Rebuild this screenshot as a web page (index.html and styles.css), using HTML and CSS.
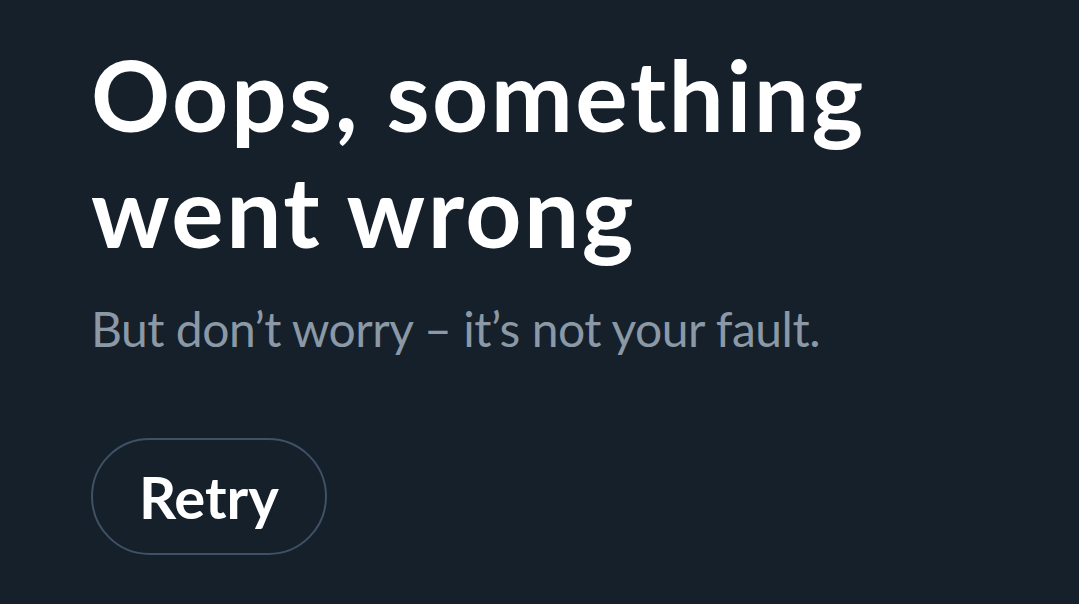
FILE: index.html
```html
<html>
<head>
    <title>Something went wrong</title>
    <link rel="stylesheet" href="styles.css">
</head>
<body>

<div class="error-page">
    <h1 class="error-title">Oops, something went wrong</h1>
    <p class="error-text">But don’t worry – it’s not your fault.</p>
    <button class="retry-btn">Retry</button>
</div>

</body>
</html>
```

FILE: styles.css
```css
body {
    background-color: #15202b;
    color: #ffffff;
    font-family: Lato, 'Noto Sans', sans-serif;
    margin: 0;
    height: 100vh;
    overflow: hidden;
}

.error-page {
    padding: 36px 0 0 91px;
    display: flex;
    flex-direction: column;
    align-items: flex-start;
}

.error-title {
    font-size: 98px;
    line-height: 116px;
    font-weight: 700;
    letter-spacing: 2.5px;
    margin: 0;
    max-width: 880px;
}

.error-text {
    color: #8b98a5;
    font-size: 48px;
    line-height: 58px;
    letter-spacing: -0.5px;
    margin: 32px 0 0 0;
}

.retry-btn {
    margin: 80px 0 0 0;
    height: 117px;
    padding: 0 46px;
    background: transparent;
    color: #ffffff;
    border: 2px solid #3e5165;
    border-radius: 9999px;
    font-family: Lato, 'Noto Sans', sans-serif;
    font-size: 58px;
    font-weight: 700;
    cursor: pointer;
}
```
